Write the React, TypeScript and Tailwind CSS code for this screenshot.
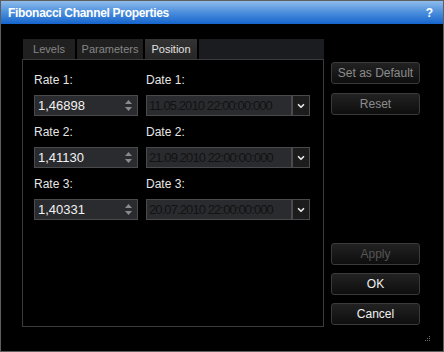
import { ChevronDown } from "lucide-react";

const rows = [
  { n: 1, rate: "1,46898", date: "11.05.2010 22:00:00:000" },
  { n: 2, rate: "1,41130", date: "21.09.2010 22:00:00:000" },
  { n: 3, rate: "1,40331", date: "20.07.2010 22:00:00:000" },
];

const Spinner = () => (
  <div className="flex flex-col items-center gap-[3px] pr-[5px]">
    <svg width="7" height="4" viewBox="0 0 7 4"><path d="M0 4 L3.5 0 L7 4 Z" fill="#8a8a8a" /></svg>
    <svg width="7" height="4" viewBox="0 0 7 4"><path d="M0 0 L3.5 4 L7 0 Z" fill="#8a8a8a" /></svg>
  </div>
);

const Button = ({ label, tone }: { label: string; tone: "on" | "off" | "dim" }) => (
  <button
    className={`h-[22px] w-[89px] rounded-[3px] border border-[#3a3a3a] bg-linear-to-b from-[#222222] to-[#0e0e0e] text-[12px] leading-none ${
      tone === "on" ? "text-[#f0f0f0]" : tone === "off" ? "text-[#8c8c8c]" : "text-[#555555]"
    }`}
  >
    {label}
  </button>
);

export default function App() {
  return (
    <div className="w-[444px] h-[352px] flex flex-col border border-[#5e5e5e] bg-black font-['Liberation_Sans',Arial,sans-serif] select-none">
      <div className="h-[23px] flex items-center justify-between px-[7px] bg-linear-to-b from-[#8ebcea] via-[#4a8edc] to-[#1464cc]">
        <span className="text-white text-[12px] font-bold tracking-[-0.3px]">Fibonacci Channel Properties</span>
        <span className="text-white text-[12px] font-bold pr-[3px]">?</span>
      </div>

      <div className="flex-1 flex pl-[21px] pt-[15px] relative">
        <div className="w-[302px] flex flex-col">
          <div className="h-[20px] flex gap-[2px] pl-[1px]">
            <div className="w-[52px] flex items-center justify-center bg-[#202020] text-[11px] text-[#858585]">Levels</div>
            <div className="w-[66px] flex items-center justify-center bg-[#202020] text-[11px] text-[#858585]">Parameters</div>
            <div className="w-[52px] flex items-center justify-center bg-linear-to-b from-[#333333] to-[#262626] text-[11px] text-[#e0e0e0]">Position</div>
            <div className="flex-1 bg-[#1b1c20]" />
          </div>
          <div className="h-[268px] border border-[#3a3a3f] pt-[13px] pl-[11px] flex flex-col gap-[9px]">
            {rows.map((r) => (
              <div key={r.n} className="flex gap-[8px]">
                <div className="w-[104px] flex flex-col gap-[8px]">
                  <span className="h-[14px] leading-[14px] text-[12px] text-[#e6e6e6]">Rate {r.n}:</span>
                  <div className="h-[21px] flex items-center justify-between border border-[#4a4a4c] bg-[#2a2b2f] pl-[3px]">
                    <span className="text-[13px] text-[#f2f2f2]">{r.rate}</span>
                    <Spinner />
                  </div>
                </div>
                <div className="w-[164px] flex flex-col gap-[8px]">
                  <span className="h-[14px] leading-[14px] text-[12px] text-[#e6e6e6]">Date {r.n}:</span>
                  <div className="h-[21px] flex">
                    <div className="flex-1 flex items-center border border-[#4a4a4c] bg-[#2a2b2f] pl-[2px] overflow-hidden">
                      <span className="text-[13px] tracking-[-0.9px] text-[#121212] whitespace-nowrap">{r.date}</span>
                    </div>
                    <div className="w-[18px] flex items-center justify-center border border-[#4a4a4c] bg-[#1c1c1c]">
                      <ChevronDown size={10} strokeWidth={4} color="#e8e8e8" />
                    </div>
                  </div>
                </div>
              </div>
            ))}
          </div>
        </div>

        <div className="flex flex-col pl-[7px] pt-[23px]">
          <div className="flex flex-col gap-[9px]">
            <Button label="Set as Default" tone="off" />
            <Button label="Reset" tone="off" />
          </div>
          <div className="flex flex-col gap-[8px] mt-[128px]">
            <Button label="Apply" tone="dim" />
            <Button label="OK" tone="on" />
            <Button label="Cancel" tone="on" />
          </div>
        </div>

        <svg className="absolute right-[13px] bottom-[9px]" width="6" height="6" viewBox="0 0 6 6">
          <g fill="#6a6a6a">
            <rect x="5" y="0" width="1" height="1" />
            <rect x="3" y="2" width="1" height="1" />
            <rect x="5" y="2" width="1" height="1" />
            <rect x="1" y="4" width="1" height="1" />
            <rect x="3" y="4" width="1" height="1" />
            <rect x="5" y="4" width="1" height="1" />
          </g>
        </svg>
      </div>
    </div>
  );
}
